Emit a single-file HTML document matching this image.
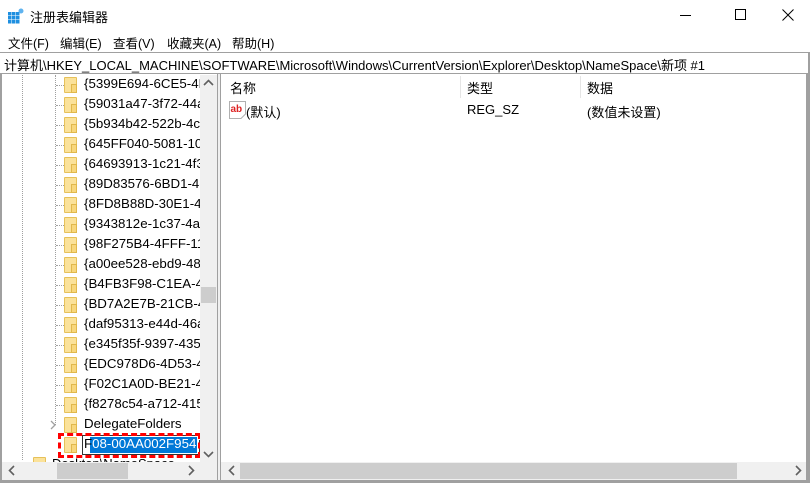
<!DOCTYPE html><html><head><meta charset="utf-8"><style>
*{margin:0;padding:0;box-sizing:border-box}
body{width:810px;height:483px;background:#fff;position:relative;overflow:hidden;font-family:"Liberation Sans","Noto Sans CJK SC",sans-serif;color:#000}
.a{position:absolute}
.t{font-size:13px;white-space:nowrap}
.fold{position:absolute;width:13px;height:16px;background:#fbe29a;border:1px solid #e6c15a;border-radius:1px}
.fold:after{content:"";position:absolute;right:-1px;bottom:-1px;width:4px;height:7px;border:1px solid #e0b84c;background:#f8d77c}
.dotv{position:absolute;width:1px;border-left:1px dotted #a0a0a0}
.doth{position:absolute;height:1px;width:8px;border-top:1px dotted #a0a0a0}
</style></head><body>
<div class="a" style="left:8px;top:8px;width:16px;height:16px">
<svg width="16" height="16"><g fill="#1e8fe0"><rect x="0" y="4" width="3.5" height="3.5"/><rect x="4" y="4" width="3.5" height="3.5"/><rect x="8" y="4" width="3.5" height="3.5"/><rect x="0" y="8" width="3.5" height="3.5"/><rect x="4" y="8" width="3.5" height="3.5"/><rect x="8" y="8" width="3.5" height="3.5"/><rect x="0" y="12" width="3.5" height="3.5"/><rect x="4" y="12" width="3.5" height="3.5"/><rect x="8" y="12" width="3.5" height="3.5"/></g><circle cx="13" cy="3" r="2.5" fill="#5fb3ef"/></svg></div>
<div class="a t" style="left:30px;top:7px;font-size:13px">注册表编辑器</div>
<div class="a" style="left:680px;top:15px;width:11px;height:1px;background:#000"></div>
<div class="a" style="left:735px;top:9px;width:11px;height:11px;border:1px solid #000"></div>
<svg class="a" style="left:782px;top:9px" width="12" height="12"><path d="M0.5 0.5L11.5 11.5M11.5 0.5L0.5 11.5" stroke="#000"/></svg>
<div class="a t" style="left:8px;top:33px;font-size:12.5px">文件(F)</div>
<div class="a t" style="left:60px;top:33px;font-size:12.5px">编辑(E)</div>
<div class="a t" style="left:113px;top:33px;font-size:12.5px">查看(V)</div>
<div class="a t" style="left:167px;top:33px;font-size:12.5px">收藏夹(A)</div>
<div class="a t" style="left:232px;top:33px;font-size:12.5px">帮助(H)</div>
<div class="a" style="left:0;top:52px;width:810px;height:22px;border-top:1px solid #a0a0a0;border-bottom:1px solid #a0a0a0;border-right:2px solid #a0a0a0"></div>
<div class="a t" style="left:4px;top:55px;font-size:13px">计算机\HKEY_LOCAL_MACHINE\SOFTWARE\Microsoft\Windows\CurrentVersion\Explorer\Desktop\NameSpace\新项 #1</div>
<div class="a" style="left:0;top:74px;width:2px;height:409px;background:#a0a0a0"></div>
<div class="a" style="left:217px;top:74px;width:4px;height:409px;background:#f0f0f0;border-left:1px solid #a0a0a0;border-right:1px solid #a0a0a0"></div>
<div class="a" style="left:806px;top:74px;width:4px;height:409px;background:#a0a0a0"></div>
<div class="a" style="left:0;top:480px;width:810px;height:3px;background:#a0a0a0"></div>
<div class="dotv" style="left:22px;top:75px;height:385px"></div>
<div class="dotv" style="left:55px;top:75px;height:350px"></div>
<div id="tree"></div>
<script>
var n=["{5399E694-6CE5-4D","{59031a47-3f72-44a","{5b934b42-522b-4c","{645FF040-5081-101","{64693913-1c21-4f3","{89D83576-6BD1-4c","{8FD8B88D-30E1-4F","{9343812e-1c37-4a4","{98F275B4-4FFF-11E","{a00ee528-ebd9-48l","{B4FB3F98-C1EA-42","{BD7A2E7B-21CB-41","{daf95313-e44d-46a","{e345f35f-9397-435","{EDC978D6-4D53-4b","{F02C1A0D-BE21-43","{f8278c54-a712-415"];
var h="";for(var i=0;i<n.length;i++){var y=85+i*20;
h+='<div class="doth" style="left:56px;top:'+y+'px"></div><div class="fold" style="left:64px;top:'+(y-8)+'px"></div><div class="a t" style="left:84px;top:'+(y-9)+'px;width:116px;overflow:hidden;font-size:13.3px">'+n[i]+'</div>';}
document.getElementById("tree").innerHTML=h;
</script>
<svg class="a" style="left:49px;top:420px" width="8" height="10"><path d="M2 1L6 5L2 9" stroke="#a0a0a0" fill="none" stroke-width="1.3"/></svg>
<div class="fold" style="left:64px;top:417px"></div>
<div class="a t" style="left:84px;top:416px;font-size:13.3px">DelegateFolders</div>
<div class="fold" style="left:64px;top:437px"></div>
<div class="a" style="left:82px;top:435px;width:118px;height:20px;background:#fff;border:1px solid #333"></div>
<div class="a" style="left:90px;top:437px;width:107px;height:16px;background:#0078d7"></div>
<div class="a t" style="left:84px;top:436px;color:#000;font-size:13.3px">F<span style="color:#fff">08-00AA002F954E}</span></div>
<div class="a" style="left:58px;top:433px;width:143px;height:25px;border:3px dashed #f00"></div>
<div class="fold" style="left:33px;top:457px"></div>
<div class="a t" style="left:52px;top:456px">Desktop\NameSpace</div>
<div class="a" style="left:200px;top:75px;width:17px;height:387px;background:#f0f0f0"></div>
<svg class="a" style="left:203px;top:79px" width="11" height="8"><path d="M1 6L5.5 1.5L10 6" stroke="#606060" fill="none" stroke-width="1.6"/></svg>
<svg class="a" style="left:203px;top:450px" width="11" height="8"><path d="M1 2L5.5 6.5L10 2" stroke="#606060" fill="none" stroke-width="1.6"/></svg>
<div class="a" style="left:201px;top:287px;width:15px;height:16px;background:#cdcdcd"></div>
<div class="a" style="left:2px;top:462px;width:215px;height:18px;background:#f0f0f0"></div>
<div class="a" style="left:57px;top:463px;width:71px;height:16px;background:#cdcdcd"></div>
<svg class="a" style="left:8px;top:465px" width="8" height="11"><path d="M6 1L1.5 5.5L6 10" stroke="#606060" fill="none" stroke-width="1.6"/></svg>
<svg class="a" style="left:187px;top:465px" width="8" height="11"><path d="M2 1L6.5 5.5L2 10" stroke="#606060" fill="none" stroke-width="1.6"/></svg>
<div class="a t" style="left:230px;top:78px">名称</div>
<div class="a" style="left:460px;top:76px;width:1px;height:22px;background:#e5e5e5"></div>
<div class="a t" style="left:467px;top:78px">类型</div>
<div class="a" style="left:580px;top:76px;width:1px;height:22px;background:#e5e5e5"></div>
<div class="a t" style="left:587px;top:78px">数据</div>
<svg class="a" style="left:229px;top:101px" width="17" height="18"><path d="M0.5 0.5H16.5V13L12 17.5H0.5Z" fill="#fff" stroke="#b0b0b0"/><text x="1.5" y="11" font-family="Liberation Sans" font-weight="bold" font-size="10" fill="#d22">ab</text></svg>
<div class="a t" style="left:246px;top:102px">(默认)</div>
<div class="a t" style="left:467px;top:102px">REG_SZ</div>
<div class="a t" style="left:587px;top:102px">(数值未设置)</div>
<div class="a" style="left:221px;top:462px;width:585px;height:18px;background:#f0f0f0"></div>
<div class="a" style="left:240px;top:463px;width:497px;height:16px;background:#cdcdcd"></div>
<svg class="a" style="left:228px;top:465px" width="8" height="11"><path d="M6 1L1.5 5.5L6 10" stroke="#606060" fill="none" stroke-width="1.6"/></svg>
<svg class="a" style="left:794px;top:465px" width="8" height="11"><path d="M2 1L6.5 5.5L2 10" stroke="#606060" fill="none" stroke-width="1.6"/></svg>
</body></html>
